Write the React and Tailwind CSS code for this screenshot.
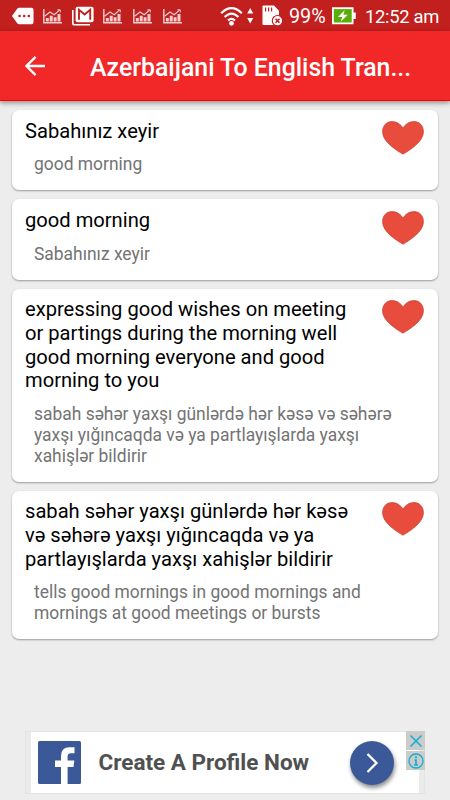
const translations = [
  { source: ['Sabahınız xeyir'], target: ['good morning'] },
  { source: ['good morning'], target: ['Sabahınız xeyir'] },
  {
    source: [
      'expressing good wishes on meeting',
      'or partings during the morning well',
      'good morning everyone and good',
      'morning to you',
    ],
    target: [
      'sabah səhər yaxşı günlərdə hər kəsə və səhərə',
      'yaxşı yığıncaqda və ya partlayışlarda yaxşı',
      'xahişlər bildirir',
    ],
  },
  {
    source: [
      'sabah səhər yaxşı günlərdə hər kəsə',
      'və səhərə yaxşı yığıncaqda və ya',
      'partlayışlarda yaxşı xahişlər bildirir',
    ],
    target: [
      'tells good mornings in good mornings and',
      'mornings at good meetings or bursts',
    ],
  },
];

const ChartIcon = ({ className }) => (
  <svg className={className} width="19" height="15" viewBox="0 0 19 15" fill="none">
    <path d="M.8 0v13.7H19" stroke="#f3d0d0" strokeWidth="1.4" />
    <path d="M2.8 12.5V9h3v3.5zM6.7 12.5V6.8h3v5.7zM10.6 12.5V8.3h3v4.2zM14.5 12.5V5h3v7.5z" fill="#f3d0d0" />
    <path d="M1.5 7.3L7 3l4.2 2.7L16.8.9" stroke="#f3d0d0" strokeWidth="1.2" />
    <path d="M14.3.8h3v2.7" stroke="#f3d0d0" strokeWidth=".9" />
  </svg>
);

const HeartIcon = () => (
  <svg width="42" height="34" viewBox="0 0 42 34" className="shrink-0">
    <path
      d="M21 33.2C14.5 29.2.6 21 .6 10.8.6 4.5 4.6.6 10 .6 15 .6 19 3.5 21 7.4 23 3.5 27 .6 32 .6 37.4.6 41.4 4.5 41.4 10.8 41.4 21 27.5 29.2 21 33.2z"
      fill="#e74c3c"
      stroke="#cf4335"
      strokeWidth=".8"
    />
  </svg>
);

const StatusBar = () => (
  <div className="flex h-[31px] items-center bg-[#c21f1f] pl-3 text-white">
    <svg width="22" height="18" viewBox="0 0 22 18" className="shrink-0">
      <path d="M0 9l5.2-7.2Q6 .8 7.3.8H19.5Q21.5.8 21.5 2.8V15.2Q21.5 17.2 19.5 17.2H7.3Q6 17.2 5.2 16.2z" fill="#fff" />
      <circle cx="7.6" cy="9" r="1.3" fill="#c21f1f" />
      <circle cx="12.2" cy="9" r="1.3" fill="#c21f1f" />
      <circle cx="16.8" cy="9" r="1.3" fill="#c21f1f" />
    </svg>
    <ChartIcon className="mt-px ml-[9px] shrink-0" />
    <svg width="22" height="20" viewBox="0 0 22 20" className="ml-[10px] shrink-0" fill="none">
      <path d="M.8 4v13Q.8 18.8 2.6 18.8H18" stroke="#fff" strokeWidth="1.6" />
      <rect x="3.6" y=".8" width="18" height="15.4" rx="2" fill="#fff" />
      <path d="M7 13.8V3.7l5.6 4.7 5.6-4.7v10.1" stroke="#c21f1f" strokeWidth="1.9" />
    </svg>
    <ChartIcon className="mt-px ml-[9px] shrink-0" />
    <ChartIcon className="mt-px ml-[11px] shrink-0" />
    <ChartIcon className="mt-px ml-[11px] shrink-0" />

    <svg width="23" height="20" viewBox="0 0 23 20" className="ml-[38px] shrink-0" fill="none" stroke="#fff">
      <path d="M1.2 7.3Q11.5-3 21.8 7.3M4.6 11Q11.5 4.2 18.4 11M8 14.5Q11.5 11.2 15 14.5" strokeWidth="2.2" />
      <circle cx="11.5" cy="17.3" r="2.4" fill="#fff" stroke="none" />
    </svg>
    <svg width="7" height="16" viewBox="0 0 7 16" className="ml-[4px] shrink-0" fill="#fff">
      <path d="M3.2 0l3 5.5h-6zM3.2 15.5l3-5.5h-6z" />
    </svg>
    <svg width="21" height="21" viewBox="0 0 21 21" className="ml-[8px] shrink-0">
      <path d="M1.5.5H12l5 5.3V20H1.5Q.5 20 .5 19V1.5Q.5.5 1.5.5z" fill="#fff" />
      <path d="M3.6 2.5v4M6.6 2.5v4M9.6 2.5v4" stroke="#c21f1f" strokeWidth="1.2" />
      <circle cx="15.5" cy="15.7" r="5.2" fill="#fff" stroke="#c21f1f" strokeWidth="1.2" />
      <path d="M13.5 13.7l4 4M17.5 13.7l-4 4" stroke="#c21f1f" strokeWidth="1.6" />
    </svg>
    <span className="mt-px ml-[6px] w-[38px] whitespace-nowrap text-[19.8px] leading-[31px]">99%</span>
    <svg width="24" height="18" viewBox="0 0 24 18" className="ml-[5px] shrink-0">
      <path d="M0 .3h21.5v17H0zM21.5 5.5h2.3v6.6h-2.3z" fill="#fff" />
      <path d="M1.8 2.1h17.900v13.4H1.8z" fill="#59ad09" />
      <path d="M12.6 3.2L6 10h4.2l-1.3 4.6 6.8-6.9h-4.3z" fill="#fff" />
    </svg>
    <span className="mt-[2px] ml-[9px] whitespace-nowrap text-[18.4px] leading-[31px] tracking-[-0.3px]">12:52 am</span>
  </div>
);

const Toolbar = () => (
  <header className="flex h-[70px] items-center border-b border-[#ff0000] bg-[#f22828] pl-[25px] text-white shadow-[0_2px_5px_rgba(0,0,0,0.4)]">
    <svg width="20" height="20" viewBox="0 0 20 20" fill="none" stroke="#fff" strokeWidth="2.3">
      <path d="M20 10H2M10.6.9L1.5 10l9.1 9.1" />
    </svg>
    <h1 className="mt-[5px] ml-[45px] whitespace-nowrap text-[24.85px] leading-[30px] font-medium">
      Azerbaijani To English Tran...
    </h1>
  </header>
);

const TranslationCard = ({ source, target }) => (
  <div className="flex items-start justify-between rounded-[7px] bg-white pt-[9.7px] pr-[13.5px] pb-[15.3px] pl-[13px] shadow-[0_1px_2px_rgba(0,0,0,0.35)]">
    <div>
      <div className="text-[20.15px] leading-[23.7px] text-black">
        {source.map((line) => (
          <p key={line} className="h-[23.7px] w-[340px] whitespace-nowrap">{line}</p>
        ))}
      </div>
      <div className="mt-[11px] ml-[9px] text-[17.43px] leading-[20.7px] text-[#737373]">
        {target.map((line) => (
          <p key={line} className="h-[20.7px] w-[340px] whitespace-nowrap">{line}</p>
        ))}
      </div>
    </div>
    <div className="mt-[1.8px] -ml-4">
      <HeartIcon />
    </div>
  </div>
);

const AdBanner = () => (
  <div className="relative ml-[25px] h-[63px] w-[400px] border border-[#e4e4e4] bg-[#ebebeb] pr-[5px] pl-[5px]">
    <div className="flex h-full items-center bg-white pl-[6.5px]">
      <svg width="43" height="43" viewBox="0 0 43 43" className="shrink-0">
        <rect width="43" height="43" rx="1.5" fill="#3b5998" />
        <path d="M23 43V26h-6v-6.5h6V15q0-8.7 8.5-8.7H36.500v6h-3.7q-3.2 0-3.2 3.2v4h6.7l-.8 6.500h-5.900v17z" fill="#fff" />
      </svg>
      <span className="ml-[18px] w-[212px] whitespace-nowrap text-[22.5px] font-bold text-[#505050]">
        Create A Profile Now
      </span>
      <div className="ml-[39.5px] flex h-[44px] w-[44px] shrink-0 items-center justify-center rounded-full bg-[#3b5998] shadow-[1px_3px_4px_rgba(0,0,0,0.45)]">
        <svg width="14" height="20" viewBox="0 0 14 20" fill="none" stroke="#fff" strokeWidth="2.3">
          <path d="M2.5 1l9 9-9 9" />
        </svg>
      </div>
    </div>
    <div className="absolute -top-px -right-px flex flex-col gap-px">
      <div className="flex h-[19px] w-[19px] items-center justify-center bg-[#cbcbcb]">
        <svg width="12" height="12" viewBox="0 0 12 12" stroke="#12aed0" strokeWidth="1.5">
          <path d="M.5.5l11 11M11.5.5l-11 11" />
        </svg>
      </div>
      <div className="flex h-[19px] w-[19px] items-center justify-center bg-[#cbcbcb]">
        <svg width="16" height="16" viewBox="0 0 16 16" fill="none" stroke="#12aed0">
          <circle cx="8" cy="8" r="7" strokeWidth="1.3" />
          <path d="M8 3.2v2M6.5 7H8v5M6 12h4" strokeWidth="1.7" />
        </svg>
      </div>
    </div>
  </div>
);

export default function App() {
  return (
    <div className="flex h-[800px] w-[450px] flex-col overflow-hidden bg-[#ededed] font-['Roboto','Noto_Sans',sans-serif]">
      <StatusBar />
      <Toolbar />
      <main className="flex flex-1 flex-col gap-[9px] pt-[9px] pr-[12.5px] pl-[12px]">
        {translations.map((item) => (
          <TranslationCard key={item.source[0]} source={item.source} target={item.target} />
        ))}
      </main>
      <div className="pb-[6px]">
        <AdBanner />
      </div>
    </div>
  );
}
